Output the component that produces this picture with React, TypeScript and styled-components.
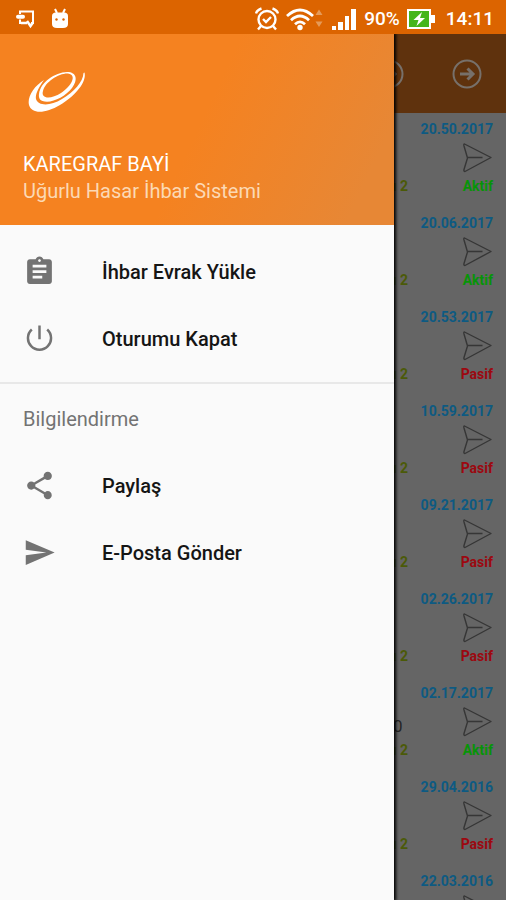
import React from "react";
import styled, { createGlobalStyle } from "styled-components";

const GlobalStyle = createGlobalStyle`
  * { box-sizing: border-box; }
  html, body, #root { height: 100%; margin: 0; }
  body { font-family: Roboto, "Noto Sans", sans-serif; overflow: hidden; }
  button { font: inherit; border: 0; padding: 0; background: none; cursor: pointer; }
`;

const Phone = styled.div`
  display: flex;
  flex-direction: column;
  height: 100vh;
  background: #656565;
`;

const StatusBar = styled.header`
  display: flex;
  align-items: center;
  justify-content: space-between;
  flex: none;
  height: 34px;
  padding: 4px 12px 0 15px;
  background: #dc6400;
  color: #fff;
  svg { display: block; flex: none; }
`;

const StatusGroup = styled.div<{ $gap: number }>`
  display: flex;
  align-items: center;
  gap: ${(p) => p.$gap}px;
`;

const StatusText = styled.span`
  font-size: 19px;
  line-height: 24px;
  font-weight: 500;
`;

const Clock = styled(StatusText)`
  margin-left: 4px;
`;

const Stage = styled.div`
  position: relative;
  flex: 1;
  min-height: 0;
  overflow: hidden;
`;

const Toolbar = styled.div`
  display: flex;
  align-items: center;
  justify-content: flex-end;
  gap: 48px;
  height: 79px;
  padding-right: 24px;
  background: #5f320d;
`;

const ToolButton = styled.button`
  color: #77706a;
  svg { display: block; }
`;

const Records = styled.ul`
  margin: 0;
  padding: 0;
  list-style: none;
`;

const Record = styled.li`
  display: flex;
  flex-direction: column;
  align-items: flex-end;
  height: 94px;
  padding: 7px 13px 0 0;
  font-size: 14px;
  line-height: 18px;
  font-weight: 700;
`;

const RecordDate = styled.time`
  color: #0d5a82;
`;

const RecordBody = styled.div`
  display: flex;
  align-items: center;
  justify-content: space-between;
  width: 100px;
  height: 39px;
`;

const Amount = styled.span`
  width: 10px;
  padding-top: 8px;
  font-size: 17px;
  font-weight: 400;
  color: #262626;
`;

const RecordAction = styled.button`
  margin-left: auto;
  color: #363636;
  svg { display: block; }
`;

const RecordFooter = styled.div`
  display: flex;
  justify-content: space-between;
  width: 100px;
`;

const Level = styled.span`
  width: 32px;
  margin-left: -17px;
  text-align: right;
  white-space: nowrap;
  color: #4b5a08;
`;

const Status = styled.span<{ $active: boolean }>`
  color: ${(p) => (p.$active ? "#079407" : "#9c0810")};
`;

const Drawer = styled.aside`
  position: absolute;
  inset: 0 112px 0 0;
  background: #fafafa;
  box-shadow: 1px 0 3px 1px #000;
`;

const DrawerHeader = styled.div`
  display: flex;
  flex-direction: column;
  height: 191px;
  padding: 37px 23px 0;
  background: linear-gradient(115deg, #f58220 50%, #e78735 90%);
  color: #fff;
  svg { display: block; margin: 0 0 38px 5px; }
`;

const HeaderText = styled.div<{ $muted?: boolean }>`
  font-size: 20px;
  line-height: 27px;
  color: ${(p) => (p.$muted ? "#fcd9b4" : "#fff")};
`;

const Menu = styled.nav`
  display: flex;
  flex-direction: column;
  padding: 13px 0 10px;
`;

const MenuItem = styled.button`
  display: flex;
  align-items: center;
  gap: 46px;
  height: 67px;
  padding: 0 23px;
  text-align: left;
  font-size: 20px;
  font-weight: 500;
  color: #151515;
  svg { display: block; flex: none; fill: #737373; }
`;

const Section = styled.section`
  border-top: 2px solid #e8e8e8;
`;

const SectionTitle = styled.h2`
  margin: 0;
  padding: 22px 23px 6px;
  font-size: 20px;
  line-height: 27px;
  font-weight: 400;
  color: #737373;
`;

const CastIcon = () => (
  <svg width="22" height="20" viewBox="0 0 22 20" fill="none" stroke="#fff" strokeWidth="2">
    <path d="M5 5V2.500H18V14H16M5 10.500V14H12" />
    <path d="M3 7.800H8" strokeWidth="4" strokeLinecap="round" />
    <path d="M6 14H12M12 12L15.500 17L18 13.500" strokeWidth="2.500" />
  </svg>
);

const RobotIcon = () => (
  <svg width="18" height="22" viewBox="0 0 18 22">
    <path d="M4 1L6 5M14 1L12 5" stroke="#fff" strokeWidth="2" />
    <path d="M1 8Q1 4.500 5 4.500H13Q17 4.500 17 8V16Q17 20 12 20H6Q1 20 1 16Z" fill="#fff" />
    <circle cx="5.500" cy="11.500" r="1.200" fill="#dc6400" />
    <circle cx="12.500" cy="11.500" r="1.200" fill="#dc6400" />
  </svg>
);

const AlarmIcon = () => (
  <svg width="24" height="24" viewBox="0 0 24 24" fill="none" stroke="#fff" strokeWidth="2.400">
    <circle cx="12" cy="12.500" r="8.500" />
    <path d="M8 12L11 15L16 10" />
    <path d="M1 6.500Q2 3 6.500 1.500M23 6.500Q22 3 17.500 1.500M6 19L3 22.500M18 19L21 22.500" />
  </svg>
);

const WifiIcon = () => (
  <svg width="38" height="24" viewBox="0 0 38 24" fill="none" stroke="#fff" strokeWidth="2.800">
    <path d="M1 9Q14 -3 27 9M5 13.200Q14 4.800 23 13.200M9 17.200Q14 12.500 19 17.200" />
    <circle cx="14" cy="20.500" r="2.700" fill="#fff" stroke="none" />
    <path d="M29.500 8L33 2.500L36.500 8ZM29.500 14.500H36.500L33 20Z" fill="#e59a58" stroke="none" />
  </svg>
);

const SignalIcon = () => (
  <svg width="26" height="22" viewBox="0 0 26 22" fill="#fff">
    <rect x="1" y="18" width="4" height="4" />
    <rect x="7" y="14" width="5" height="8" />
    <rect x="14" y="8" width="4" height="14" />
    <rect x="20" y="1" width="5" height="21" />
  </svg>
);

const BatteryIcon = () => (
  <svg width="28" height="20" viewBox="0 0 28 20">
    <rect x="1" y="1" width="22" height="18" fill="#45b51c" stroke="#fff" strokeWidth="2" />
    <path d="M24 6H28V14H24Z" fill="#fff" />
    <path d="M15 3L6.500 11H11.500L9.500 17L18 9H13Z" fill="#fff" />
  </svg>
);

const CircleArrow = () => (
  <svg width="30" height="30" viewBox="0 0 30 30" fill="none" stroke="currentColor" strokeWidth="2">
    <circle cx="15" cy="15" r="13.500" />
    <path d="M8 15H21M15.500 9.500L21 15L15.500 20.500" strokeWidth="3" />
  </svg>
);

const PaperPlane = () => (
  <svg width="30" height="30" viewBox="0 0 30 30" fill="none" stroke="currentColor" strokeWidth="1.400" strokeLinejoin="round">
    <path d="M1.500 1L28 14.500L2 28.500Q0.500 28.500 1 26.500L4.500 15L1 3Q0.500 1 1.500 1ZM4.500 14.500H19.500" />
  </svg>
);

const Logo = () => (
  <svg width="58" height="42" viewBox="0 0 58 42" fill="#fff">
    <path d="M16 9C6 15 -1 26 1 34C3.500 43 17 43 32 34C47 25 59 11 56.500 1.500L55.500 2C55 11 46 21 34 28C22 35.500 10 35 8 28C7 23 11 16 16 9Z" />
    <path fillRule="evenodd" d="M11 23C12.500 11 27 1.500 39 1C49 1 50 9 44 17C37 26 23 33 14.500 30C11.500 29 10.500 26 11 23ZM15 20C12.500 28 23 28.500 33 22C43.500 15 49.500 4 40 2.500C31 2 17 11 15 20Z" />
  </svg>
);

const ClipboardIcon = () => (
  <svg width="33" height="33" viewBox="0 0 24 24">
    <path d="M19 3h-4.180C14.400 1.840 13.300 1 12 1c-1.300 0-2.400.840-2.820 2H5c-1.100 0-2 .900-2 2v14c0 1.100.900 2 2 2h14c1.100 0 2-.900 2-2V5c0-1.100-.900-2-2-2zm-7 0c.550 0 1 .450 1 1s-.450 1-1 1-1-.450-1-1 .450-1 1-1zm2 14H7v-2h7v2zm3-4H7v-2h10v2zm0-4H7V7h10v2z" />
  </svg>
);

const PowerIcon = () => (
  <svg width="33" height="33" viewBox="0 0 24 24">
    <path d="M12.900 2.500h-1.800v10h1.800zM18.200 4.800l-1.200 1.300A7.500 7.500 0 1 1 7 6.100l-1.200-1.300A9.300 9.300 0 1 0 18.200 4.800z" />
  </svg>
);

const ShareIcon = () => (
  <svg width="33" height="33" viewBox="0 0 24 24">
    <path d="M18 16.080c-.760 0-1.440.300-1.960.770L8.910 12.700c.050-.230.090-.460.090-.700s-.040-.470-.090-.700l7.050-4.110c.540.500 1.250.810 2.040.810 1.660 0 3-1.340 3-3s-1.340-3-3-3-3 1.340-3 3c0 .240.040.470.090.700L8.040 9.810C7.500 9.310 6.790 9 6 9c-1.660 0-3 1.340-3 3s1.340 3 3 3c.790 0 1.500-.310 2.040-.810l7.120 4.160c-.050.210-.080.430-.080.650 0 1.610 1.310 2.920 2.920 2.920s2.920-1.310 2.920-2.920-1.310-2.920-2.920-2.920z" />
  </svg>
);

const SendIcon = () => (
  <svg width="33" height="33" viewBox="0 0 24 24">
    <path d="M2.010 21L23 12 2.010 3 2 10l15 2-15 2z" />
  </svg>
);

type RecordData = { date: string; status?: "Aktif" | "Pasif"; amount?: string };

const records: RecordData[] = [
  { date: "20.50.2017", status: "Aktif" },
  { date: "20.06.2017", status: "Aktif" },
  { date: "20.53.2017", status: "Pasif" },
  { date: "10.59.2017", status: "Pasif" },
  { date: "09.21.2017", status: "Pasif" },
  { date: "02.26.2017", status: "Pasif" },
  { date: "02.17.2017", status: "Aktif", amount: "0" },
  { date: "29.04.2016", status: "Pasif" },
  { date: "22.03.2016" },
];

export default function App() {
  return (
    <>
      <GlobalStyle />
      <Phone>
        <StatusBar>
          <StatusGroup $gap={14}>
            <CastIcon />
            <RobotIcon />
          </StatusGroup>
          <StatusGroup $gap={7}>
            <AlarmIcon />
            <WifiIcon />
            <SignalIcon />
            <StatusText>90%</StatusText>
            <BatteryIcon />
            <Clock>14:11</Clock>
          </StatusGroup>
        </StatusBar>
        <Stage>
          <Toolbar>
            <ToolButton aria-label="Yenile"><CircleArrow /></ToolButton>
            <ToolButton aria-label="Çıkış"><CircleArrow /></ToolButton>
          </Toolbar>
          <Records>
            {records.map((r) => (
              <Record key={r.date}>
                <RecordDate>{r.date}</RecordDate>
                <RecordBody>
                  {r.amount && <Amount>{r.amount}</Amount>}
                  <RecordAction aria-label="Gönder"><PaperPlane /></RecordAction>
                </RecordBody>
                {r.status && (
                  <RecordFooter>
                    <Level>ı 2</Level>
                    <Status $active={r.status === "Aktif"}>{r.status}</Status>
                  </RecordFooter>
                )}
              </Record>
            ))}
          </Records>
          <Drawer>
            <DrawerHeader>
              <Logo />
              <HeaderText>KAREGRAF BAYİ</HeaderText>
              <HeaderText $muted>Uğurlu Hasar İhbar Sistemi</HeaderText>
            </DrawerHeader>
            <Menu>
              <MenuItem><ClipboardIcon />İhbar Evrak Yükle</MenuItem>
              <MenuItem><PowerIcon />Oturumu Kapat</MenuItem>
            </Menu>
            <Section>
              <SectionTitle>Bilgilendirme</SectionTitle>
              <Menu>
                <MenuItem><ShareIcon />Paylaş</MenuItem>
                <MenuItem><SendIcon />E-Posta Gönder</MenuItem>
              </Menu>
            </Section>
          </Drawer>
        </Stage>
      </Phone>
    </>
  );
}
